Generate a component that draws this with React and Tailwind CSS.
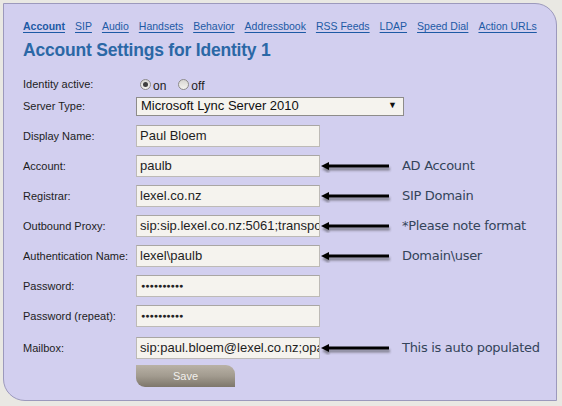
import React from "react";

const Arrow = () => (
  <svg width="72" height="14" viewBox="0 0 72 14" className="shrink-0">
    <defs>
      <filter id="sh" x="-10%" y="-50%" width="120%" height="250%">
        <feGaussianBlur stdDeviation="1.2" />
      </filter>
    </defs>
    <g filter="url(#sh)" opacity="0.5">
      <line x1="6" y1="10" x2="70" y2="10" stroke="#333" strokeWidth="3" />
      <polygon points="2,10 9,6 9,14" fill="#333" />
    </g>
    <line x1="6" y1="7" x2="69" y2="7" stroke="#000" strokeWidth="3" />
    <polygon points="1,7 9,3 9,11" fill="#000" />
  </svg>
);

const Note = ({ children }) => (
  <>
    <Arrow />
    <span className="ml-[10px] text-[13px] text-[#34445a] font-['DejaVu_Sans',sans-serif] tracking-[-0.3px] whitespace-nowrap">
      {children}
    </span>
  </>
);

const Input = ({ value }) => (
  <div className="w-[184px] h-[22px] shrink-0 bg-[#f5f3ee] border border-[#bdbab6] border-t-[#a9a6a3] flex items-center px-[3px] overflow-hidden whitespace-nowrap text-[13px] text-[#1e1e1e] font-['Liberation_Sans',Arial,sans-serif]">
    <span className="whitespace-nowrap">{value}</span>
  </div>
);

const Pw = () => (
  <div className="w-[184px] h-[22px] shrink-0 bg-[#f5f3ee] border border-[#bdbab6] border-t-[#a9a6a3] flex items-center px-[4px] overflow-hidden text-[7px] tracking-[0px] text-[#222] font-['Liberation_Sans',Arial,sans-serif]">
    ●●●●●●●●●●
  </div>
);

const Row = ({ label, children, h = "h-[30px]" }) => (
  <div className={`flex items-center ${h}`}>
    <div className="w-[113px] shrink-0 text-[11px] text-[#1d1d1d] font-['Liberation_Sans',Arial,sans-serif] whitespace-nowrap">
      {label}
    </div>
    {children}
  </div>
);

const Radio = ({ checked }) => (
  <span className="w-[11px] h-[11px] rounded-full border border-[#8d8b8a] bg-gradient-to-b from-[#d8d6d2] to-[#f4f3f0] flex items-center justify-center">
    {checked && <span className="w-[5px] h-[5px] rounded-full bg-[#3f3f3f]" />}
  </span>
);

export default function App() {
  const tabs = ["Account", "SIP", "Audio", "Handsets", "Behavior", "Addressbook", "RSS Feeds", "LDAP", "Speed Dial", "Action URLs"];
  return (
    <div className="w-[562px] h-[406px] bg-[#e9e8e3] pt-[3px] pl-[3px] overflow-hidden">
      <div className="w-[554px] h-[398px] bg-[#d2cfef] border border-[#9c99bc] rounded-tr-[22px] rounded-bl-[22px] pl-[19px] pt-[16px]">
        <div className="flex gap-[10px] h-[14px] items-center text-[10.5px] font-['Liberation_Sans',Arial,sans-serif] text-[#1d5aa5] whitespace-nowrap">
          {tabs.map((t, i) => (
            <span key={t} className={`underline underline-offset-2 whitespace-nowrap ${i === 0 ? "font-bold" : ""}`}>{t}</span>
          ))}
        </div>
        <div className="mt-[6px] h-[20px] flex items-center text-[17.5px] font-bold text-[#2b68a6] font-['Liberation_Sans',Arial,sans-serif] tracking-[-0.2px] whitespace-nowrap">
          Account Settings for Identity 1
        </div>
        <div className="mt-[13px]">
          <Row label="Identity active:" h="h-[22px]">
            <div className="flex items-center ml-[4px] text-[12px] text-[#1d1d1d] font-['Liberation_Sans',Arial,sans-serif]">
              <Radio checked />
              <span className="ml-[2px] mt-[3px]">on</span>
              <span className="ml-[12px]"><Radio /></span>
              <span className="ml-[2px] mt-[3px]">off</span>
            </div>
          </Row>
          <Row label="Server Type:" h="h-[22px]">
            <div className="w-[268px] h-[19px] bg-[#f5f3ee] border border-[#8e8c8a] flex items-center justify-between pl-[4px] pr-[6px] text-[13px] text-[#111] font-['Liberation_Sans',Arial,sans-serif]">
              <span>Microsoft Lync Server 2010</span>
              <span className="text-[9px]">▼</span>
            </div>
          </Row>
          <div className="h-[4px]" />
          <Row label="Display Name:"><Input value="Paul Bloem" /></Row>
          <Row label="Account:"><Input value="paulb" /><Note>AD Account</Note></Row>
          <Row label="Registrar:"><Input value="lexel.co.nz" /><Note>SIP Domain</Note></Row>
          <Row label="Outbound Proxy:"><Input value="sip:sip.lexel.co.nz:5061;transport=tls" /><Note>*Please note format</Note></Row>
          <Row label="Authentication Name:"><Input value="lexel\paulb" /><Note>Domain\user</Note></Row>
          <Row label="Password:"><Pw /></Row>
          <Row label="Password (repeat):"><Pw /></Row>
          <div className="h-[2px]" />
          <Row label="Mailbox:"><Input value="sip:paul.bloem@lexel.co.nz;opaque=app:voicemail" /><Note>This is auto populated</Note></Row>
          <div className="ml-[113px] mt-[2px] w-[99px] h-[22px] rounded-tr-[9px] rounded-bl-[9px] bg-gradient-to-b from-[#b9b2a6] via-[#a29b8f] to-[#7e776b] flex items-center justify-center text-[11px] text-[#f2f0ec] font-['Liberation_Sans',Arial,sans-serif]">
            Save
          </div>
        </div>
      </div>
    </div>
  );
}
